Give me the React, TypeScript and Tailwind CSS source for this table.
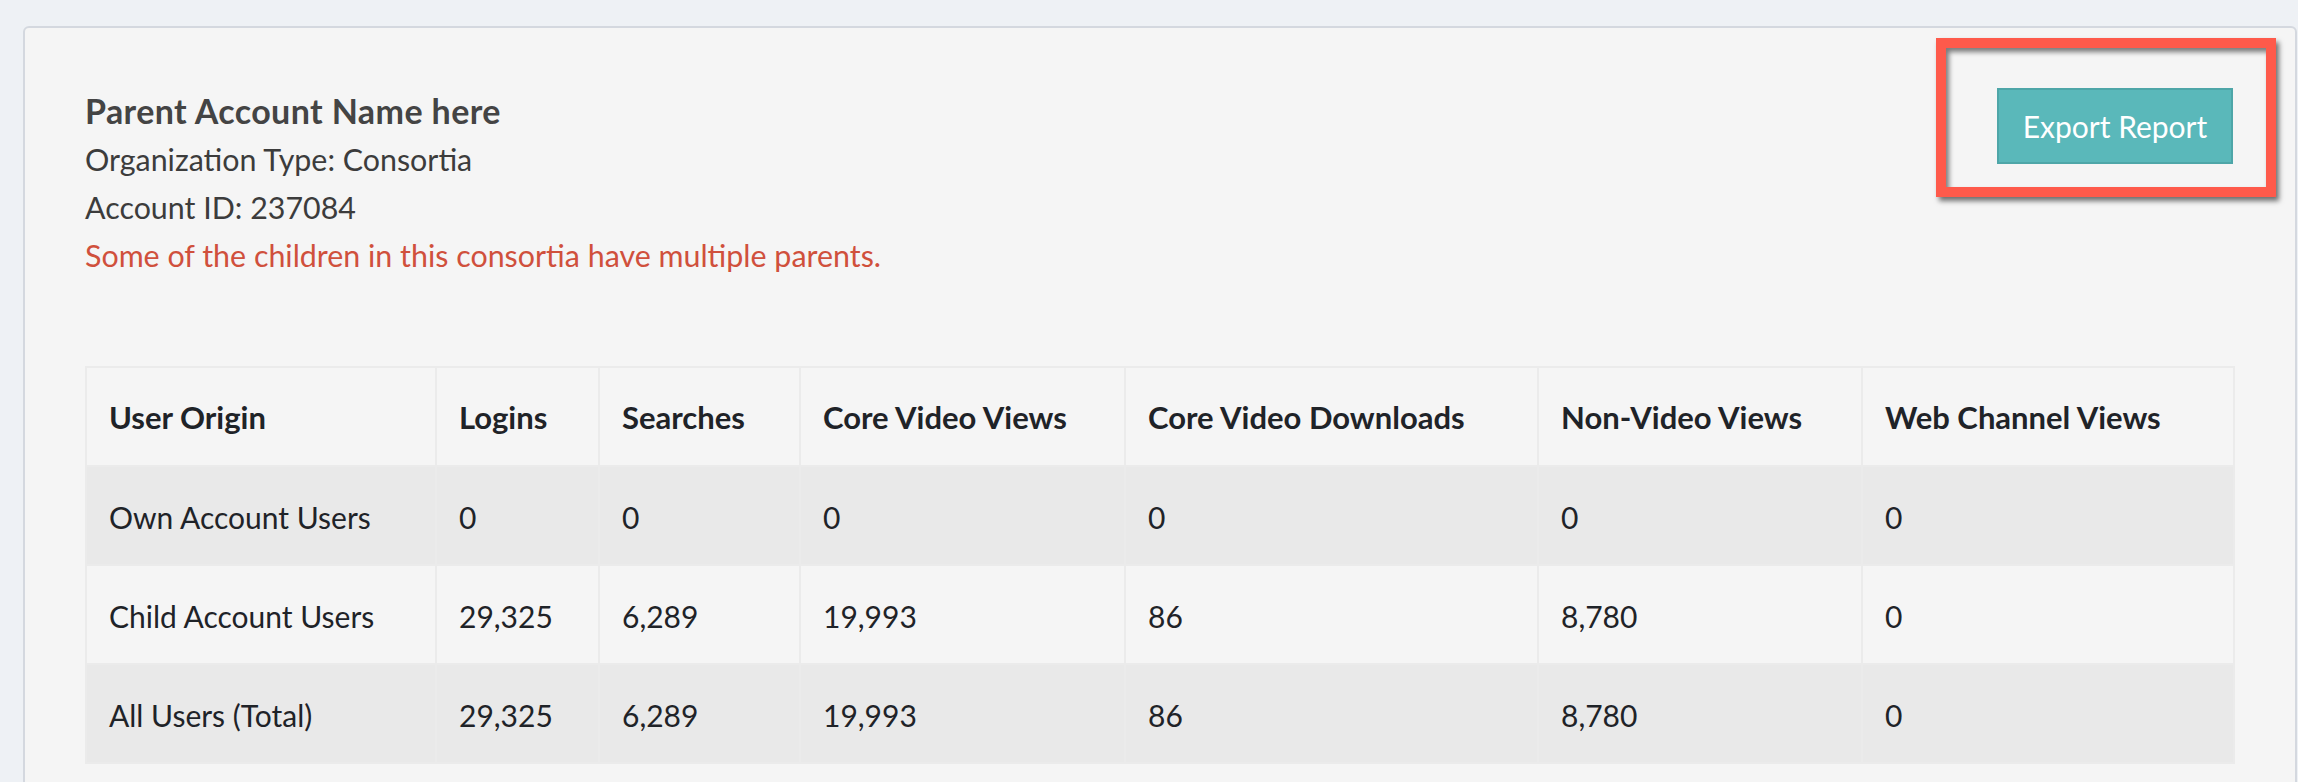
import React from "react";

const cols = [350, 163, 201, 325, 413, 324, 372];
const headers = [
  "User Origin",
  "Logins",
  "Searches",
  "Core Video Views",
  "Core Video Downloads",
  "Non-Video Views",
  "Web Channel Views",
];
const rows = [
  ["Own Account Users", "0", "0", "0", "0", "0", "0"],
  ["Child Account Users", "29,325", "6,289", "19,993", "86", "8,780", "0"],
  ["All Users (Total)", "29,325", "6,289", "19,993", "86", "8,780", "0"],
];

export default function App() {
  return (
    <div
      className="w-[2298px] h-[782px] overflow-hidden bg-[#eef1f5] pt-[26px] pl-[23px]"
      style={{ fontFamily: "Lato, 'Noto Sans', sans-serif" }}
    >
      <div className="relative w-[2274px] rounded-md border-2 border-[#d4d8df] bg-[#f5f5f5] pl-[60px] pr-[62px] pt-[59px] pb-[60px]">
        <div className="flex items-start justify-between">
          <div className="text-[30.4px] leading-[48px] text-[#3c3c3c]">
            <div className="text-[34px] font-bold tracking-[0.4px] text-[#444444]">Parent Account Name here</div>
            <div>Organization Type: Consortia</div>
            <div>Account ID: 237084</div>
            <div className="text-[#d0503c]">Some of the children in this consortia have multiple parents.</div>
          </div>
          <button className="mt-px flex h-[76px] w-[236px] items-center justify-center border-2 border-[#4ea6a8] bg-[#5ab8ba] text-[30px] text-white">
            Export Report
          </button>
        </div>

        <table className="mt-[87px] w-[2148px] table-fixed border-collapse text-[30px] leading-[36px] text-[#1f2328]">
          <colgroup>
            {cols.map((w, i) => (
              <col key={i} style={{ width: w }} />
            ))}
          </colgroup>
          <thead>
            <tr className="h-[99px] bg-[#f5f5f5]">
              {headers.map((h) => (
                <th
                  key={h}
                  className="border-2 border-[#ebebeb] pl-[22px] text-left align-middle text-[31px] font-bold"
                >
                  {h}
                </th>
              ))}
            </tr>
          </thead>
          <tbody>
            {rows.map((r, i) => (
              <tr
                key={i}
                className={i % 2 === 0 ? "h-[99px] bg-[#e9e9e9]" : "h-[99px] bg-[#f5f5f5]"}
              >
                {r.map((c, j) => (
                  <td
                    key={j}
                    className="border-2 border-[#ebebeb] pl-[22px] pt-[2px] text-left align-middle"
                  >
                    {c}
                  </td>
                ))}
              </tr>
            ))}
          </tbody>
        </table>

        <div className="pointer-events-none absolute left-[1911px] top-[10px] h-[159px] w-[340px] border-[10px] border-[#fe5a4b] shadow-[3px_4px_5px_rgba(0,0,0,0.55),inset_3px_4px_5px_rgba(0,0,0,0.5)]" />
      </div>
    </div>
  );
}
